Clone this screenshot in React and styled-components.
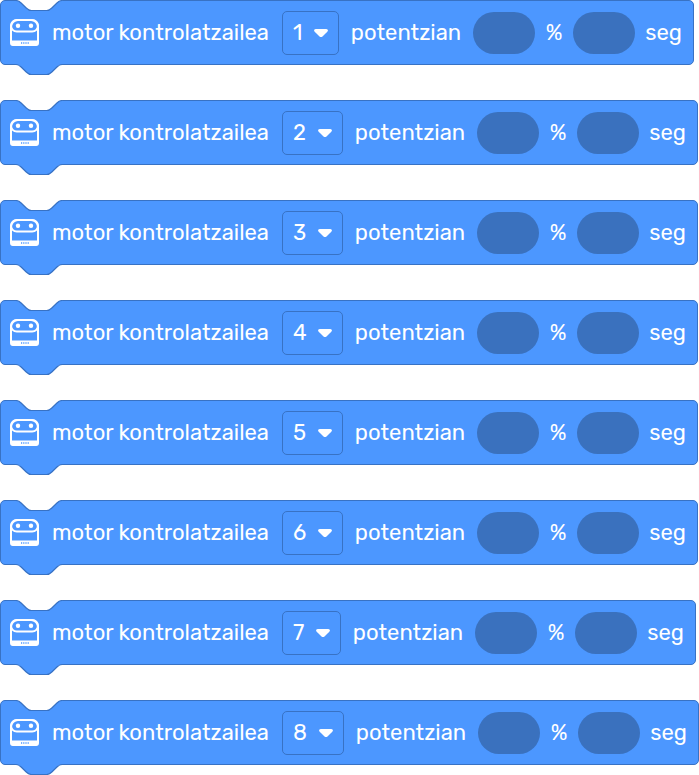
import React from "react";
import styled, { createGlobalStyle } from "styled-components";

const BLUE = "#4c97ff";
const EDGE = "#3872c4";
const DARK = "#3a71be";

const GlobalStyle = createGlobalStyle`
  * { box-sizing: border-box; }
  body {
    margin: 0;
    background: #fff;
    font-family: Rubik, Roboto, "Liberation Sans", sans-serif;
  }
`;

const Stack = styled.main`
  display: flex;
  flex-direction: column;
  align-items: flex-start;
  gap: 35px;
  padding-bottom: 10px;
`;

const Block = styled.form`
  position: relative;
  display: flex;
  align-items: center;
  gap: 10px;
  height: 65px;
  padding: 0 11px 0 9px;
  border: 1px solid ${EDGE};
  border-radius: 5px;
  background: ${BLUE};
  color: #fff;
  font-size: 22px;
  font-weight: 400;
  line-height: 28px;
  white-space: nowrap;
`;

const Connector = styled.svg`
  position: absolute;
  left: 14px;
  width: 49px;
  height: 13px;
  ${(p) => (p.$side === "top" ? "top: -1px;" : "bottom: -12px;")}
`;

const RobotIcon = styled.svg`
  flex: none;
  width: 29px;
  height: 27px;
`;

const Caption = styled.label`
  min-width: ${(p) => p.$min}px;
  text-align: center;
`;

const Unit = styled.span`
  min-width: 18px;
  text-align: center;
`;

const Picker = styled.span`
  position: relative;
  display: flex;
  align-items: center;
`;

const Menu = styled.select`
  appearance: none;
  width: ${(p) => p.$width}px;
  height: 44px;
  padding: 0 0 0 10px;
  border: 1px solid ${EDGE};
  border-radius: 5px;
  background: ${BLUE};
  color: inherit;
  font: inherit;
`;

const Arrow = styled.svg`
  position: absolute;
  right: 10px;
  width: 16px;
  height: 10px;
  pointer-events: none;
`;

const Slot = styled.input`
  width: 62px;
  height: 42px;
  padding: 0 12px;
  border: 0;
  border-radius: 21px;
  background: ${DARK};
  color: inherit;
  font: inherit;
  text-align: center;
`;

const CURVE = "c2 0 3 1 4 2l4 4c1 1 2 2 4 2h12c2 0 3-1 4-2l4-4c1-1 2-2 4-2";

function Notch() {
  return (
    <Connector $side="top" viewBox="0 0 49 13" aria-hidden="true">
      <g transform="translate(1 .5) scale(1.28 1.25)">
        <path d={`M0 0${CURVE}V-1H0z`} fill="#fff" />
        <path d={`M0 0${CURVE}`} fill="none" stroke={EDGE} strokeWidth="0.9" />
      </g>
    </Connector>
  );
}

function Tab() {
  return (
    <Connector $side="bottom" viewBox="0 0 49 13" aria-hidden="true">
      <g transform="translate(1 1.5) scale(1.28 1.25)">
        <path d={`M0 0${CURVE}V-1.5H0z`} fill={BLUE} />
        <path d={`M0 0${CURVE}`} fill="none" stroke={EDGE} strokeWidth="0.9" />
      </g>
    </Connector>
  );
}

function Robot() {
  return (
    <RobotIcon viewBox="0 0 29 27" aria-hidden="true">
      <path
        d="M8 1h13a7 7 0 0 1 7 7v16a2 2 0 0 1-2 2H3a2 2 0 0 1-2-2V8a7 7 0 0 1 7-7z"
        fill="none"
        stroke="#fff"
        strokeWidth="2"
      />
      <rect x="1" y="1" width="27" height="11.6" rx="5.8" fill="none" stroke="#fff" strokeWidth="2" />
      <circle cx="8" cy="6.8" r="2.2" fill="#fff" />
      <circle cx="21" cy="6.8" r="2.2" fill="#fff" />
      <path d="M1 21.5h27v3a2 2 0 0 1-2 2H3a2 2 0 0 1-2-2z" fill="#fff" />
      <path d="M11 24h8" stroke={BLUE} strokeWidth="1.4" strokeDasharray="1.2 1" />
    </RobotIcon>
  );
}

const PORTS = [
  { port: 1, width: 57 },
  { port: 2, width: 61 },
  { port: 3, width: 61 },
  { port: 4, width: 61 },
  { port: 5, width: 61 },
  { port: 6, width: 61 },
  { port: 7, width: 59 },
  { port: 8, width: 62 },
];

function MotorBlock({ port, width }) {
  return (
    <Block>
      <Notch />
      <Robot />
      <Caption $min={223} htmlFor={`port-${port}`}>motor kontrolatzailea</Caption>
      <Picker>
        <Menu id={`port-${port}`} $width={width} defaultValue={port}>
          {PORTS.map((p) => (
            <option key={p.port} value={p.port}>{p.port}</option>
          ))}
        </Menu>
        <Arrow viewBox="0 0 16 10" aria-hidden="true">
          <path
            d="M3 1h10c2 0 2.5 1.6 1.3 2.8L9.5 8.4q-1.5 1.3-3 0L1.7 3.8C.5 2.6 1 1 3 1z"
            fill="#fff"
          />
        </Arrow>
      </Picker>
      <Caption $min={114} htmlFor={`power-${port}`}>potentzian</Caption>
      <Slot id={`power-${port}`} type="text" />
      <Unit>%</Unit>
      <Slot id={`time-${port}`} type="text" />
      <Caption $min={37} htmlFor={`time-${port}`}>seg</Caption>
      <Tab />
    </Block>
  );
}

export default function App() {
  return (
    <>
      <GlobalStyle />
      <Stack>
        {PORTS.map((p) => (
          <MotorBlock key={p.port} {...p} />
        ))}
      </Stack>
    </>
  );
}
